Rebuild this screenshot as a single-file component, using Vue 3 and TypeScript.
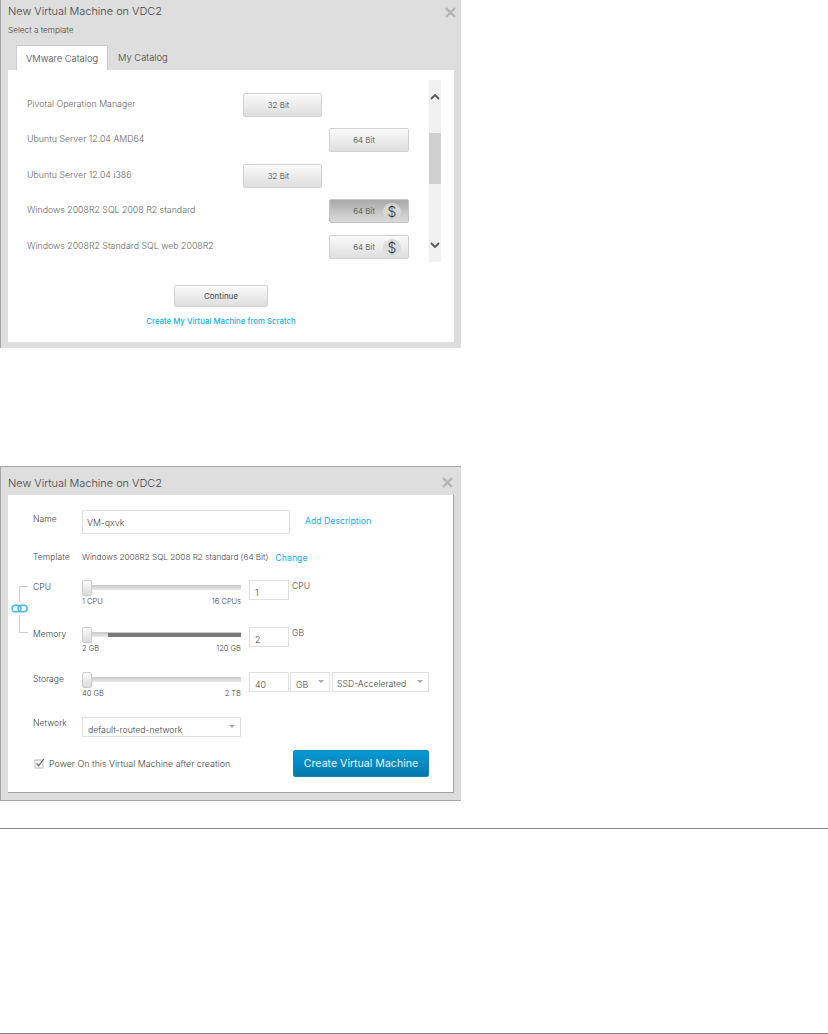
<script setup lang="ts">
interface Row { name: string; bit: string; paid?: boolean; active?: boolean }
const rows: Row[] = [
  { name: 'Pivotal Operation Manager', bit: '32' },
  { name: 'Ubuntu Server 12.04 AMD64', bit: '64' },
  { name: 'Ubuntu Server 12.04 i386', bit: '32' },
  { name: 'Windows 2008R2 SQL 2008 R2 standard', bit: '64', paid: true, active: true },
  { name: 'Windows 2008R2 Standard SQL web 2008R2', bit: '64', paid: true },
]
</script>

<template>
  <div class="page">
    <section class="dialog first">
      <svg class="close" width="11" height="11" viewBox="0 0 11 11"><path d="M1 1l9 9M10 1l-9 9" /></svg>
      <h2 class="title">New Virtual Machine on VDC2</h2>
      <p class="subtitle">Select a template</p>
      <div class="tabs">
        <div class="tab active">VMware Catalog</div>
        <div class="tab">My Catalog</div>
      </div>
      <div class="body catalog">
        <div class="list-wrap">
          <div class="list">
            <div v-for="r in rows" :key="r.name" class="row">
              <span class="row-name">{{ r.name }}</span>
              <div class="slot" :class="{ right: r.bit === '64' }">
                <button class="btn bit" :class="{ pressed: r.active, paid: r.paid }">
                  <span class="bit-label">{{ r.bit }} Bit</span>
                  <span v-if="r.paid" class="dollar">$</span>
                </button>
              </div>
            </div>
          </div>
          <div class="scroll">
            <svg width="12" height="12" viewBox="0 0 12 12"><path d="M2 8l4-4 4 4" /></svg>
            <div class="thumb"></div>
            <svg class="down" width="12" height="12" viewBox="0 0 12 12"><path d="M2 4l4 4 4-4" /></svg>
          </div>
        </div>
        <div class="actions">
          <button class="btn continue">Continue</button>
          <a class="link scratch">Create My Virtual Machine from Scratch</a>
        </div>
      </div>
    </section>

    <section class="dialog second">
      <svg class="close c2" width="11" height="11" viewBox="0 0 11 11"><path d="M1 1l9 9M10 1l-9 9" /></svg>
      <h2 class="title t2">New Virtual Machine on VDC2</h2>
      <div class="body form">
        <div class="bracket">
          <svg class="chain" width="17" height="13" viewBox="0 0 17 13">
            <rect x="1" y="3.2" width="9" height="6.6" rx="3.3" />
            <rect x="7" y="3.2" width="9" height="6.6" rx="3.3" />
          </svg>
        </div>
        <div class="f-row name-row">
          <label class="f-label">Name</label>
          <div class="input name-input">VM-qxvk</div>
          <a class="link add">Add Description</a>
        </div>
        <div class="f-row tpl-row">
          <label class="f-label">Template</label>
          <span class="tpl">Windows 2008R2 SQL 2008 R2 standard (64 Bit)</span>
          <a class="link change">Change</a>
        </div>
        <div class="f-row cpu-row">
          <label class="f-label l-mid">CPU</label>
          <div class="slider">
            <div class="track"><div class="knob"></div></div>
            <div class="ends"><span>1 CPU</span><span>16 CPUs</span></div>
          </div>
          <div class="input small">1</div>
          <span class="unit">CPU</span>
        </div>
        <div class="f-row mem-row">
          <label class="f-label l-mid">Memory</label>
          <div class="slider">
            <div class="track"><div class="fill"></div><div class="knob"></div></div>
            <div class="ends"><span>2 GB</span><span>120 GB</span></div>
          </div>
          <div class="input small">2</div>
          <span class="unit">GB</span>
        </div>
        <div class="f-row sto-row">
          <label class="f-label l-mid">Storage</label>
          <div class="slider">
            <div class="track"><div class="knob"></div></div>
            <div class="ends"><span>40 GB</span><span>2 TB</span></div>
          </div>
          <div class="input small">40</div>
          <div class="input select gb">GB<i class="caret"></i></div>
          <div class="input select ssd">SSD-Accelerated<i class="caret"></i></div>
        </div>
        <div class="f-row net-row">
          <label class="f-label">Network</label>
          <div class="input select net">default-routed-network<i class="caret"></i></div>
        </div>
        <div class="foot">
          <label class="check">
            <svg width="11" height="11" viewBox="0 0 11 11">
              <rect x="1" y="2" width="8" height="8" fill="#fff" stroke="#bbb" />
              <path d="M2.6 5.5l2 2.4L9.8 1" fill="none" stroke="#666" stroke-width="1.2" />
            </svg>
            Power On this Virtual Machine after creation
          </label>
          <button class="create">Create Virtual Machine</button>
        </div>
      </div>
    </section>

    <hr class="rule r1" />
    <hr class="rule r2" />
  </div>
</template>

<style>
html, body { margin: 0; background: #fff; }
</style>

<style scoped>
.page {
  width: 828px;
  height: 1034px;
  overflow: hidden;
  font-family: Inter, "Liberation Sans", sans-serif;
  font-size: 8px;
  font-weight: 300;
  color: #666;
  background: #fff;
}
.dialog {
  position: relative;
  box-sizing: border-box;
  width: 461px;
  background: #dedede;
  border-left: 1px solid #a8a8a8;
  padding-left: 7px;
}
.first { height: 348px; }
.second {
  height: 335px;
  margin-top: 118px;
  border-top: 1px solid #a8a8a8;
  border-bottom: 1px solid #a8a8a8;
}
.close { position: absolute; right: 5px; top: 7px; }
.close.c2 { right: 8px; top: 10px; }
.close path { stroke: #b4b4b4; stroke-width: 2.4; fill: none; }
.title {
  margin: 0;
  padding-top: 4px;
  font-size: 10.9px;
  line-height: 15px;
  font-weight: 300;
  color: #444;
}
.t2 { padding-top: 9px; height: 19px; }
.subtitle {
  margin: 5px 0 0;
  font-size: 8.2px;
  line-height: 12px;
  color: #444;
}
.tabs { display: flex; margin: 9px 0 0 8px; height: 25px; }
.tab {
  box-sizing: border-box;
  padding: 0 10px;
  line-height: 25px;
  font-size: 9.4px;
  color: #444;
}
.tab.active {
  background: #fff;
  width: 92px;
  text-align: center;
  border-top: 1px solid #ccc;
  border-left: 1px solid #ccc;
  border-right: 1px solid #ccc;
  padding: 0;
}
.body { background: #fff; box-sizing: border-box; }
.catalog { width: 446px; height: 272px; }
.list-wrap {
  display: flex;
  padding: 10px 13px 0 19px;
  justify-content: space-between;
  height: 192px;
  box-sizing: border-box;
}
.list { padding-top: 13px; width: 382px; }
.row { display: flex; align-items: center; height: 24px; margin-bottom: 11.4px; }
.row-name { width: 216px; flex: none; font-size: 8.8px; line-height: 22px; height: 24px; }
.slot { width: 166px; display: flex; }
.slot.right { justify-content: flex-end; }
.btn {
  font-family: inherit;
  font-weight: 300;
  color: #444;
  border: 1px solid #d2d2d2;
  border-radius: 2px;
  background: linear-gradient(#fafafa, #dedede);
  padding: 0;
}
.bit {
  position: relative;
  width: 79px;
  height: 24px;
  font-size: 8px;
}
.bit-label { position: relative; left: -4px; }
.slot.right .bit-label { left: -5px; }
.slot.right .bit { width: 80px; }
.bit.pressed { background: linear-gradient(#a9a9a9, #dcdcdc); border-color: #c4c4c4; }
.dollar {
  position: absolute;
  right: 7px;
  top: 3px;
  width: 18px;
  height: 18px;
  border-radius: 50%;
  background: #dcdcdc;
  font-size: 14px;
  line-height: 18px;
  color: #333;
}
.pressed .dollar { background: #d6d6d6; }
.scroll {
  position: relative;
  width: 12px;
  height: 182px;
  background: #f0f0f0;
  display: flex;
  flex-direction: column;
}
.scroll svg { margin-top: 11px; flex: none; }
.scroll svg path { fill: none; stroke: #555; stroke-width: 1.8; }
.scroll .thumb { margin-top: 30px; height: 51px; background: #cfcfcf; flex: none; }
.scroll svg.down { margin-top: 55px; }
.actions {
  display: flex;
  flex-direction: column;
  align-items: center;
  padding: 23px 0 0 0;
  width: 426px;
}
.continue {
  width: 94px;
  height: 22px;
  font-size: 8px;
  font-weight: 400;
}
.link { color: #17ade6; }
.scratch { margin-top: 8px; font-size: 7.8px; font-weight: 500; line-height: 12px; }

.form { position: relative; width: 446px; height: 298px; padding: 15px 0 0 25px; border-right: 1px solid #a0a0a0; border-bottom: 1px solid #a0a0a0; }
.bracket {
  position: absolute;
  left: 11px;
  top: 91px;
  width: 9px;
  height: 47px;
  box-sizing: border-box;
  border: 1px solid #d0d0d0;
  border-right: 0;
}
.chain { position: absolute; left: -9px; top: 15px; background: #fff; }
.chain rect { fill: none; stroke: #45b9ee; stroke-width: 1.6; }
.f-row { display: flex; align-items: flex-start; position: relative; }
.f-label { width: 49px; flex: none; font-size: 8.6px; line-height: 12px; color: #444; }
.name-row { height: 23px; }
.name-row .f-label { padding-top: 3px; }
.input {
  box-sizing: border-box;
  border: 1px solid #e0e0e0;
  background: #fff;
  color: #444;
  font-size: 8.8px;
  padding-left: 4px;
  flex: none;
}
.name-input { width: 208px; height: 24px; line-height: 23px; }
.add { margin: 5px 0 0 15px; font-size: 8.7px; line-height: 12px; font-weight: 400; }
.tpl-row { margin-top: 16px; height: 16px; align-items: center; }
.tpl { font-size: 8.18px; color: #444; }
.change { margin-left: 7px; font-size: 8.8px; font-weight: 400; }
.cpu-row { margin-top: 15px; height: 47px; }
.mem-row { height: 45px; }
.sto-row { height: 45px; }
.net-row { height: 33px; }
.l-mid { padding-top: 1px; }
.slider { width: 159px; flex: none; margin-right: 8px; }
.track {
  position: relative;
  height: 5px;
  margin-top: 5px;
  background: linear-gradient(#c8c8c8, #e8e8e8);
}
.fill { position: absolute; left: 26px; right: 0; top: 1px; height: 4px; background: #7a7a7a; }
.knob {
  position: absolute;
  left: 0;
  top: -5px;
  width: 10px;
  height: 16px;
  box-sizing: border-box;
  background: linear-gradient(#fafafa, #dcdcdc);
  border: 1px solid #ccc;
  border-radius: 2px;
}
.ends { display: flex; justify-content: space-between; margin-top: 7px; font-size: 7.5px; line-height: 10px; color: #444; }
.small { width: 40px; height: 20px; line-height: 23px; padding-left: 5px; }
.unit { margin-left: 3px; font-size: 8.6px; line-height: 12px; margin-top: 0; color: #444; }
.select { position: relative; }
.caret {
  position: absolute;
  right: 5px;
  top: 7px;
  border-top: 3px solid #aaa;
  border-left: 3px solid transparent;
  border-right: 3px solid transparent;
}
.gb { width: 40px; height: 20px; line-height: 23px; margin-left: 1px; padding-left: 5px; }
.ssd { width: 97px; height: 20px; line-height: 23px; margin-left: 2px; padding-left: 4px; font-size: 8.7px; }
.net { width: 159px; height: 20px; line-height: 24px; padding-left: 5px; font-size: 8.7px; }
.foot { display: flex; justify-content: space-between; align-items: center; width: 396px; height: 27px; }
.check { display: flex; align-items: center; gap: 4px; font-size: 8.9px; color: #444; padding-left: 1px; }
.create {
  width: 136px;
  height: 27px;
  font-family: inherit;
  font-size: 10.6px;
  font-weight: 400;
  color: #e6f4fb;
  border: 1px solid #0b87bc;
  border-radius: 2px;
  background: linear-gradient(#089ad4, #0478ac);
  padding: 0;
}
.rule { border: 0; height: 1px; background: #8a8a8a; margin: 0; }
.r1 { margin-top: 27px; }
.r2 { margin-top: 204px; }
</style>
